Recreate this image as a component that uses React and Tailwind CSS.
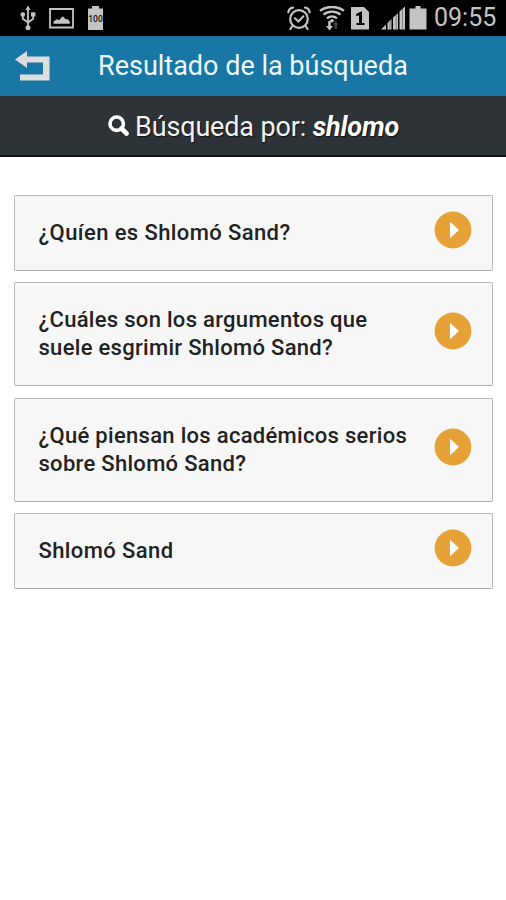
const results = [
  { id: 1, title: ['¿Quíen es Shlomó Sand?'] },
  { id: 2, title: ['¿Cuáles son los argumentos que', 'suele esgrimir Shlomó Sand?'] },
  { id: 3, title: ['¿Qué piensan los académicos serios', 'sobre Shlomó Sand?'] },
  { id: 4, title: ['Shlomó Sand'] },
];

function StatusBar() {
  return (
    <div className="h-9 shrink-0 bg-black flex items-center justify-between pl-5 pr-[10px] text-[#c4c4c4]">
      <div className="flex items-center">
        {/* usb */}
        <svg width="16" height="26" viewBox="0 0 16 26" fill="none" stroke="currentColor" strokeWidth="1.8">
          <path d="M8 4v18M2.8 10v3.8L8 17.5M13.2 9v4.8L8 17.5" />
          <path d="M8 0.5l2.6 4.5H5.4z" fill="currentColor" stroke="none" />
          <circle cx="8" cy="22.8" r="2.5" fill="currentColor" stroke="none" />
          <circle cx="2.8" cy="9.5" r="2.3" fill="currentColor" stroke="none" />
          <path d="M11 7.3h4.4v4.2H11z" fill="currentColor" stroke="none" />
        </svg>
        {/* picture */}
        <svg className="ml-[13px]" width="25" height="21" viewBox="0 0 25 21" fill="none">
          <path d="M1 1h23v18.5H1z" stroke="currentColor" strokeWidth="1.8" />
          <path d="M4.5 15.8v-2.3l3.5-2.3 2 1 3.7-4 3.3 3.4 1.8-.7 2 2.8v2.1z" fill="currentColor" />
        </svg>
        {/* full battery */}
        <svg className="ml-[13px]" width="18" height="26" viewBox="0 0 18 26">
          <path d="M1 3.5h4V1h7v2.5h4V25H1z" fill="currentColor" />
          <text x="8.5" y="17" fontSize="8.5" fontWeight="500" fontFamily="Roboto, sans-serif" textAnchor="middle" fill="#111">100</text>
        </svg>
      </div>
      <div className="flex items-center">
        {/* alarm */}
        <svg width="24" height="25" viewBox="0 0 24 25" fill="none" stroke="currentColor" strokeWidth="2.2" strokeLinecap="round">
          <circle cx="12" cy="13" r="8.8" />
          <path d="M8 12.3l3.4 3.2 5-5.2" />
          <path d="M1.3 6.2C1.8 3.6 3.5 2 6 1.7M22.7 6.2C22.2 3.6 20.5 2 18 1.7M5.4 20l-2 3M18.6 20l2 3" />
        </svg>
        {/* wifi */}
        <svg className="ml-2" width="26" height="25" viewBox="0 0 26 25" fill="none" stroke="currentColor" strokeWidth="2.4">
          <path d="M1 4.7c7-5 17-5 24 0M4.5 8.6c5-4 12-4 17 0M8 12.4c3-2.6 7-2.6 10 0" />
          <path d="M13 12.8l2.5 2-2.5 2-2.5-2z" fill="currentColor" stroke="none" />
          <path d="M10.5 15v6" strokeWidth="2.6" />
          <path d="M7 20h7L10.5 24.5z" fill="currentColor" stroke="none" />
          <path d="M16.7 23v-5" stroke="#444" />
          <path d="M14 18.5h5.4L16.7 15z" fill="#444" stroke="none" />
        </svg>
        {/* sim */}
        <svg className="ml-[6px]" width="18" height="23" viewBox="0 0 18 23">
          <path d="M0 0h13l5 5v17.5H0z" fill="currentColor" />
          <path d="M11 4.5v11.5h2.5V18h-8v-2H8V8.2l-2.8 1V7L10 4.5z" fill="#000" />
        </svg>
        {/* signal */}
        <svg className="ml-3" width="25" height="24" viewBox="0 0 25 24" fill="currentColor">
          <path d="M0 23.5L5 18.5v5zM6.5 17l4-4v10.5h-4zM12 11.5l5-4.2v16.2h-5zM18.5 5.5l5.5-5v23h-5.5z" />
          <path d="M9 14v9.5M15.2 9v14.5M21.5 3v20.5" stroke="#666" strokeWidth="0.7" />
        </svg>
        {/* battery */}
        <svg className="ml-[3px]" width="18" height="24" viewBox="0 0 18 24" fill="currentColor">
          <path d="M0.5 2.5h6V0h5v2.5h6V23.5H0.5z" />
        </svg>
        <span className="ml-[7px] w-[62px] whitespace-nowrap text-[25px] leading-9">09:55</span>
      </div>
    </div>
  );
}

function ResultCard({ title }) {
  const single = title.length === 1;
  return (
    <li
      className={
        'flex justify-between rounded-[2px] border border-[#b9b9b9] border-b-[#aeaeae] bg-[#f7f7f7] pl-[23.5px] pr-5 ' +
        (single ? 'h-[76px] tracking-[0.4px]' : 'h-[104px] tracking-[0.3px]')
      }
    >
      <p className="pt-[23px] text-[22px] leading-7 font-medium text-[#222] whitespace-nowrap">
        {title.map((line) => (
          <span key={line} className="block">{line}</span>
        ))}
      </p>
      <svg className={single ? 'mt-[15px]' : 'mt-[29px]'} width="38" height="38" viewBox="0 0 38 38">
        <circle cx="19" cy="19" r="18.4" fill="#e6a137" />
        <path d="M16 10.8l9 8.2-9 8.2z" fill="#fff" />
      </svg>
    </li>
  );
}

export default function App() {
  return (
    <div className="h-[900px] w-full overflow-hidden bg-white flex flex-col font-[Roboto,sans-serif]">
      <StatusBar />

      <header className="h-[60px] shrink-0 bg-[#1877a5] flex items-center">
        <button className="ml-[15px] w-[35px]">
          <svg width="35" height="30" viewBox="0 0 35 30" fill="none">
            <path d="M0 8.5L12 0v5.5h22.5v24H5v-6h23v-12H12v5.5z" fill="#dedede" />
          </svg>
        </button>
        <h1 className="ml-12 whitespace-nowrap text-[27px] leading-9 text-[#eef7fb]">Resultado de la búsqueda</h1>
      </header>

      <div className="h-[61px] shrink-0 bg-[#2e3337] border-b-2 border-[#14141f] flex items-center pl-[108px] text-[#f0f2f3] text-shadow-[1px_1px_1px_#111]">
        <svg width="21" height="21" viewBox="0 0 21 21" fill="none" stroke="#fff">
          <circle cx="8.7" cy="8.7" r="6.7" strokeWidth="3.6" />
          <path d="M13.5 13.5l5 5" strokeWidth="4.6" strokeLinecap="round" />
        </svg>
        <p className="ml-[6px] pt-[2px] whitespace-nowrap text-[27px] leading-9 tracking-[-0.15px]">
          Búsqueda por: <em className="font-bold italic text-white">shlomo</em>
        </p>
      </div>

      <ul className="mt-[38px] ml-[14px] mr-[13px] flex flex-col gap-[11.4px]">
        {results.map((r) => (
          <ResultCard key={r.id} title={r.title} />
        ))}
      </ul>
    </div>
  );
}
